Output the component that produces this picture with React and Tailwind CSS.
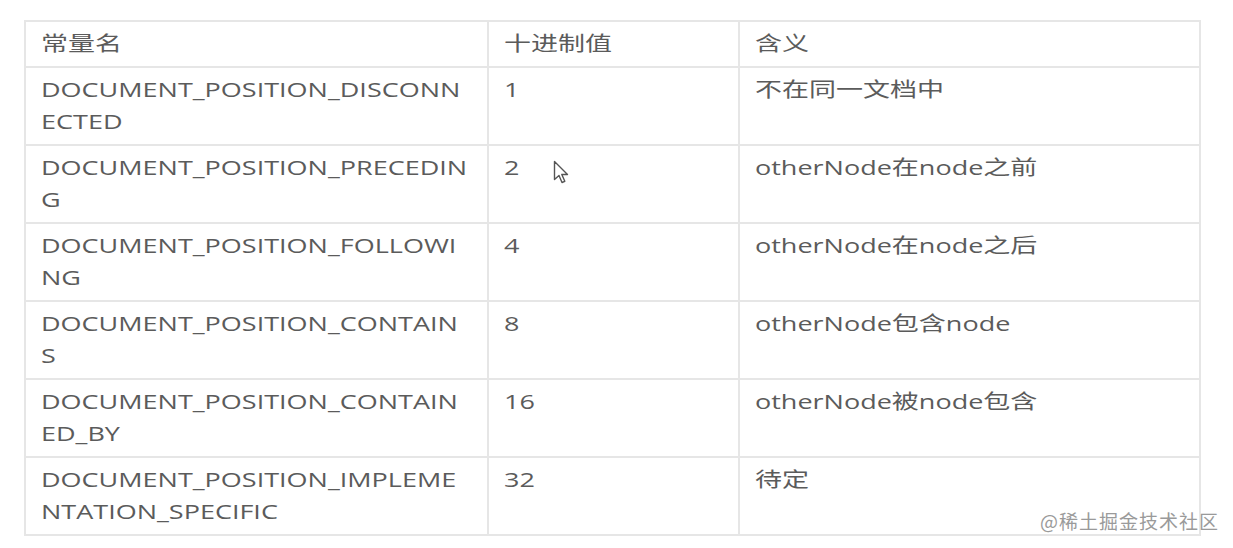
import React from "react";

const rows = [
  ["DOCUMENT_POSITION_DISCONNECTED", "1", "不在同一文档中"],
  ["DOCUMENT_POSITION_PRECEDING", "2", "otherNode在node之前"],
  ["DOCUMENT_POSITION_FOLLOWING", "4", "otherNode在node之后"],
  ["DOCUMENT_POSITION_CONTAINS", "8", "otherNode包含node"],
  ["DOCUMENT_POSITION_CONTAINED_BY", "16", "otherNode被node包含"],
  ["DOCUMENT_POSITION_IMPLEMENTATION_SPECIFIC", "32", "待定"],
];

function Txt({ children, wide }) {
  return (
    <div
      className={
        wide
          ? "w-[318px] origin-left scale-x-[1.35] break-all"
          : "w-fit whitespace-nowrap origin-left scale-x-[1.35]"
      }
    >
      {children}
    </div>
  );
}

export default function App() {
  return (
    <div
      className="relative w-[1233px] h-[548px] bg-white overflow-hidden text-[#5b5b5b]"
      style={{ fontFamily: '"Open Sans", "Noto Sans CJK SC", sans-serif' }}
    >
      <div className="pt-[20px] pl-[24px]">
        <table className="w-[1175px] border-collapse table-fixed text-[20px] leading-[32px]">
          <colgroup>
            <col className="w-[463px]" />
            <col className="w-[251px]" />
            <col className="w-[461px]" />
          </colgroup>
          <thead>
            <tr className="h-[45px]">
              <th className="border-2 border-[#e6e6e6] px-[15px] py-[6px] text-left font-normal align-top">
                <Txt>常量名</Txt>
              </th>
              <th className="border-2 border-[#e6e6e6] px-[15px] py-[6px] text-left font-normal align-top">
                <Txt>十进制值</Txt>
              </th>
              <th className="border-2 border-[#e6e6e6] px-[15px] py-[6px] text-left font-normal align-top">
                <Txt>含义</Txt>
              </th>
            </tr>
          </thead>
          <tbody>
            {rows.map((r) => (
              <tr key={r[0]} className="h-[78px]">
                <td className="border-2 border-[#e6e6e6] pl-[15px] pr-[12px] py-[6px] align-top">
                  <Txt wide>{r[0]}</Txt>
                </td>
                <td className="border-2 border-[#e6e6e6] px-[15px] py-[6px] align-top">
                  <Txt>{r[1]}</Txt>
                </td>
                <td className="border-2 border-[#e6e6e6] px-[15px] py-[6px] align-top">
                  <Txt>{r[2]}</Txt>
                </td>
              </tr>
            ))}
          </tbody>
        </table>
      </div>

      <svg
        className="absolute left-[553px] top-[160px]"
        width="17"
        height="25"
        viewBox="0 0 17 25"
      >
        <path
          d="M1.5 1.5 L1.5 19.5 L6 15.5 L9 22.5 L11.8 21.3 L8.8 14.5 L14.5 14.5 Z"
          fill="#ffffff"
          stroke="#555555"
          strokeWidth="1.4"
          strokeLinejoin="round"
        />
      </svg>

      <div
        className="absolute left-[1040px] top-[507px] text-[19px] leading-[28px] tracking-[1px] text-[#9a9a9a]"
        style={{ fontFamily: '"Noto Sans CJK SC", sans-serif', textShadow: "0 0 2px #ffffff" }}
      >
        @稀土掘金技术社区
      </div>
    </div>
  );
}
